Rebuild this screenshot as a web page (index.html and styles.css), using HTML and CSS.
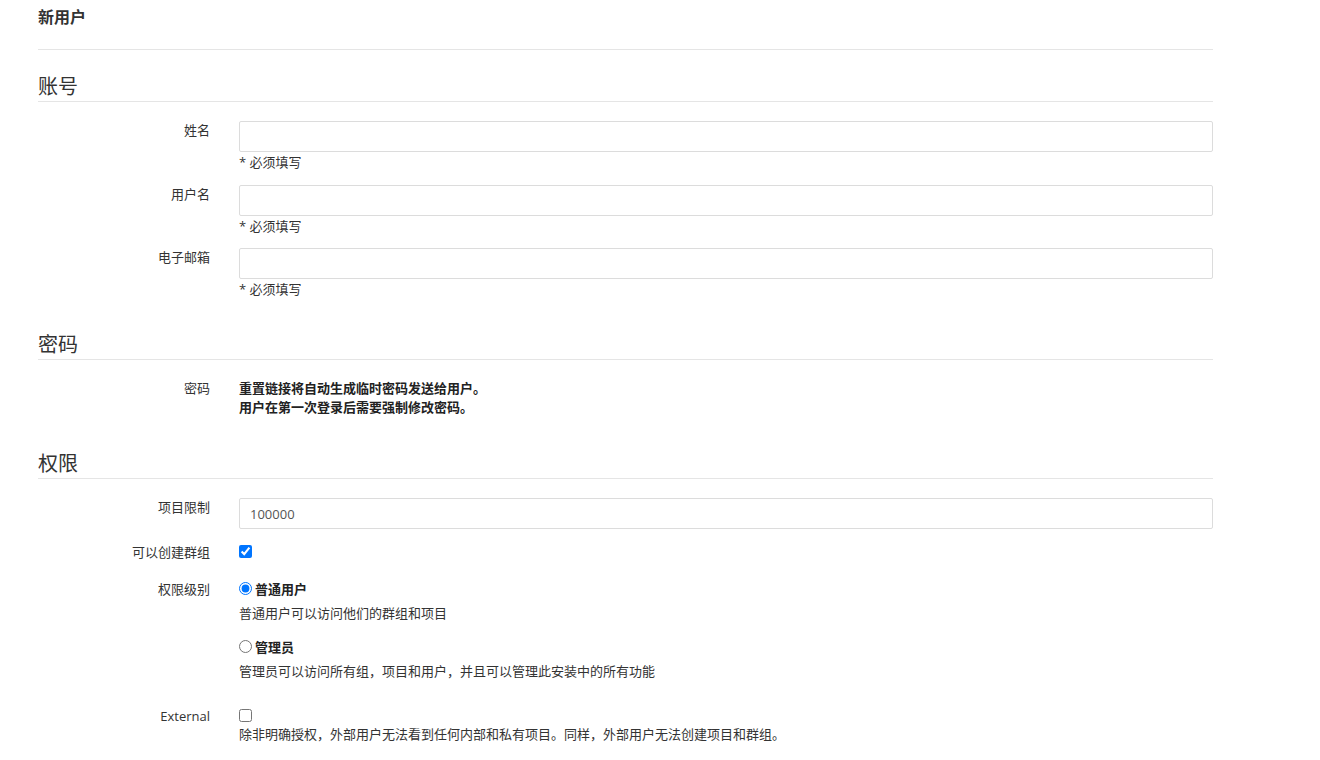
FILE: index.html
```html
<!DOCTYPE html>
<html lang="zh-CN">
<head>
<meta charset="utf-8">
<title>新用户</title>
<link rel="stylesheet" href="styles.css">
</head>
<body>
<div class="page">
  <h3 class="page-title">新用户</h3>
  <hr class="title-rule">

  <h4 class="section-heading first">账号</h4>
  <div class="form-group">
    <label class="control-label">姓名</label>
    <div class="controls">
      <input class="text-input" type="text">
      <div class="help">* 必须填写</div>
    </div>
  </div>
  <div class="form-group">
    <label class="control-label">用户名</label>
    <div class="controls">
      <input class="text-input" type="text">
      <div class="help">* 必须填写</div>
    </div>
  </div>
  <div class="form-group">
    <label class="control-label">电子邮箱</label>
    <div class="controls">
      <input class="text-input" type="text">
      <div class="help">* 必须填写</div>
    </div>
  </div>

  <h4 class="section-heading">密码</h4>
  <div class="form-group">
    <label class="control-label">密码</label>
    <div class="controls">
      <div class="strong-note">重置链接将自动生成临时密码发送给用户。<br>用户在第一次登录后需要强制修改密码。</div>
    </div>
  </div>

  <h4 class="section-heading">权限</h4>
  <div class="form-group">
    <label class="control-label">项目限制</label>
    <div class="controls">
      <input class="text-input" type="text" value="100000">
    </div>
  </div>
  <div class="form-group">
    <label class="control-label">可以创建群组</label>
    <div class="controls check-row">
      <input class="box" type="checkbox" checked>
    </div>
  </div>
  <div class="form-group">
    <label class="control-label">权限级别</label>
    <div class="controls radio-group">
      <label class="radio-line"><input class="box" type="radio" name="level" checked><span>普通用户</span></label>
      <div class="radio-desc">普通用户可以访问他们的群组和项目</div>
      <label class="radio-line"><input class="box" type="radio" name="level"><span>管理员</span></label>
      <div class="radio-desc">管理员可以访问所有组，项目和用户，并且可以管理此安装中的所有功能</div>
    </div>
  </div>
  <div class="form-group">
    <label class="control-label">External</label>
    <div class="controls">
      <div class="ext-check"><input class="box" type="checkbox"></div>
      <div class="help">除非明确授权，外部用户无法看到任何内部和私有项目。同样，外部用户无法创建项目和群组。</div>
    </div>
  </div>
</div>
</body>
</html>
```
FILE: styles.css
```css
* { box-sizing: border-box; }

body {
  margin: 0;
  background: #ffffff;
  color: #333333;
  font-family: "Open Sans", "Noto Sans CJK SC", sans-serif;
  font-size: 13px;
}

.page {
  width: 1175px;
  margin-left: 38px;
  padding-top: 6px;
}

.page-title {
  margin: 0;
  font-size: 16px;
  line-height: 22px;
  font-weight: bold;
  color: #333333;
}

.title-rule {
  margin: 21px 0 0 0;
  border: 0;
  border-top: 1px solid #e5e5e5;
  height: 0;
}

.section-heading {
  margin: 33px 0 19px 0;
  font-size: 20px;
  line-height: 28px;
  font-weight: normal;
  color: #333333;
  border-bottom: 1px solid #e5e5e5;
}

.section-heading.first { margin-top: 23px; }

.form-group {
  display: grid;
  grid-template-columns: 172px 1fr;
  column-gap: 29px;
  margin-bottom: 13.5px;
}

.control-label {
  text-align: right;
  line-height: 18px;
  color: #333333;
}

.controls { min-width: 0; }

.text-input {
  display: block;
  width: 100%;
  height: 31px;
  margin: 0;
  padding: 0 10px;
  border: 1px solid #dcdcdc;
  border-radius: 2px;
  font-family: "Open Sans", "Noto Sans CJK SC", sans-serif;
  font-size: 13px;
  color: #555555;
  background: #ffffff;
  outline: none;
}

.help {
  margin-top: 1px;
  line-height: 18px;
  color: #333333;
}

.strong-note {
  font-weight: bold;
  line-height: 19px;
  color: #222222;
}

.box {
  width: 13px;
  height: 13px;
  margin: 0;
  flex: none;
}

.check-row {
  display: flex;
  align-items: flex-start;
  height: 23.5px;
  padding-top: 2.5px;
}

.radio-group {
  padding-bottom: 13.5px;
}

.radio-line {
  display: flex;
  align-items: center;
  gap: 3px;
  height: 18px;
  font-weight: bold;
  color: #222222;
  margin-bottom: 6px;
}

.radio-desc {
  line-height: 18px;
  margin-bottom: 16px;
  color: #333333;
}

.radio-desc:last-child { margin-bottom: 0; }

.ext-check {
  display: flex;
  align-items: center;
  height: 17px;
}
```
